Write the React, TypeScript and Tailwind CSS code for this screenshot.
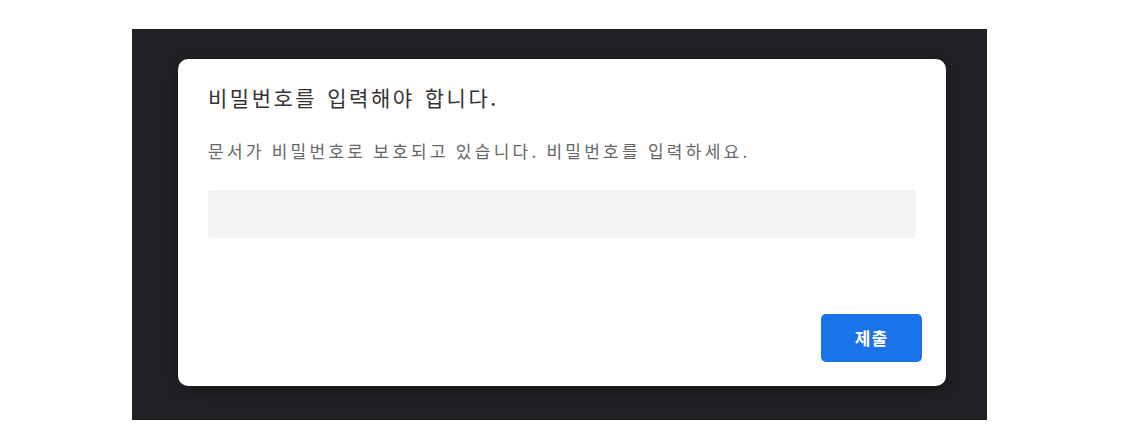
import React, { useState } from 'react';

const App: React.FC = () => {
  const [password, setPassword] = useState('');

  return (
    <div className="w-[1126px] h-[445px] bg-white pt-[29px] pl-[132px] font-['Noto_Sans_CJK_KR','Noto_Sans',sans-serif]">
      <div className="w-[855px] h-[391px] bg-[#202124] pt-[30px] pl-[46px]">
        <div className="w-[768px] h-[327px] bg-white rounded-[10px] shadow-[0_4px_16px_rgba(0,0,0,0.35)] px-[30px] pt-[23px] pb-[24px] flex flex-col">
          <h2 className="text-[21px] leading-[30px] text-[#333333] tracking-[2.5px] [word-spacing:3px]">비밀번호를 입력해야 합니다.</h2>
          <p className="mt-[27px] text-[17px] leading-[24px] text-[#666666] tracking-[3.25px]">
            문서가 비밀번호로 보호되고 있습니다. 비밀번호를 입력하세요.
          </p>
          <input
            type="password"
            value={password}
            onChange={(e) => setPassword(e.target.value)}
            className="mt-[27px] w-[708px] h-[48px] rounded-[4px] bg-[#f1f3f4] px-3 text-[15px] outline-none"
          />
          <div className="flex-1" />
          <div className="flex justify-end">
            <button className="w-[101px] h-[48px] rounded-[5px] bg-[#1a73e8] text-white text-[17px] font-bold tracking-[1px] mr-[-6px]">
              제출
            </button>
          </div>
        </div>
      </div>
    </div>
  );
};

export default App;
